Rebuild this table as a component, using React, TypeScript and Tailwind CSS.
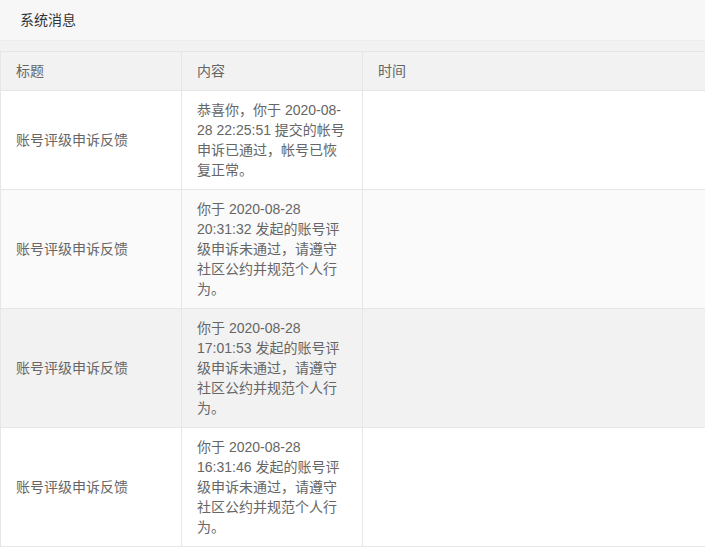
const rows = [
  {
    title: "账号评级申诉反馈",
    lines: ["恭喜你，你于 2020-08-", "28 22:25:51 提交的帐号", "申诉已通过，帐号已恢", "复正常。"],
    bg: "bg-white",
  },
  {
    title: "账号评级申诉反馈",
    lines: ["你于 2020-08-28", "20:31:32 发起的账号评", "级申诉未通过，请遵守", "社区公约并规范个人行", "为。"],
    bg: "bg-[#fafafa]",
  },
  {
    title: "账号评级申诉反馈",
    lines: ["你于 2020-08-28", "17:01:53 发起的账号评", "级申诉未通过，请遵守", "社区公约并规范个人行", "为。"],
    bg: "bg-[#f2f2f2]",
  },
  {
    title: "账号评级申诉反馈",
    lines: ["你于 2020-08-28", "16:31:46 发起的账号评", "级申诉未通过，请遵守", "社区公约并规范个人行", "为。"],
    bg: "bg-white",
  },
];

export default function App() {
  return (
    <div
      className="min-h-[547px] bg-[#f2f2f2] text-[14px]"
      style={{ fontFamily: '"Liberation Sans", Arial, "Noto Sans CJK SC", sans-serif' }}
    >
      <div className="flex h-[41px] items-center border-b border-[#ececec] bg-[#f7f7f7] px-5 text-[#333]">
        系统消息
      </div>

      <div className="mt-[10px] border-t border-[#e6e6e6]">
        <div className="grid grid-cols-[181px_181px_1fr] bg-[#f2f2f2] leading-5 text-[#666]">
          <Cell>标题</Cell>
          <Cell>内容</Cell>
          <Cell>时间</Cell>
        </div>
        {rows.map((row, i) => (
          <div key={i} className={`grid grid-cols-[181px_181px_1fr] leading-5 text-[#666] ${row.bg}`}>
            <Cell className="flex items-center">{row.title}</Cell>
            <Cell>
              {row.lines.map((line) => (
                <span key={line} className="block whitespace-nowrap">{line}</span>
              ))}
            </Cell>
            <Cell />
          </div>
        ))}
      </div>
    </div>
  );
}

function Cell({ children, className = "" }: { children?: React.ReactNode; className?: string }) {
  return (
    <div className={`min-h-[39px] border-b border-l border-[#e6e6e6] px-[15px] py-[9px] ${className}`}>
      {children}
    </div>
  );
}
